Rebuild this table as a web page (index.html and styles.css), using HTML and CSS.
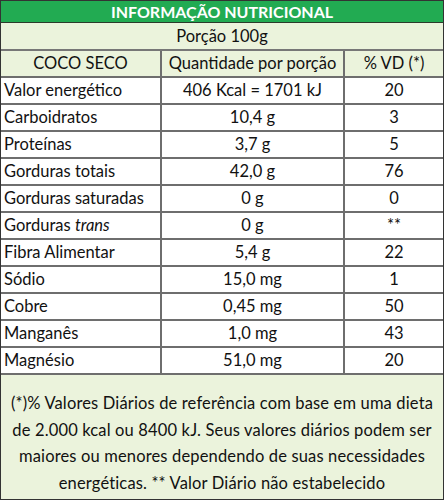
FILE: index.html
```html
<!DOCTYPE html>
<html lang="pt">
<head>
  <meta charset="UTF-8" />
  <meta name="viewport" content="width=device-width, initial-scale=1.0" />
  <title>Informação Nutricional - Coco Seco</title>
  <link rel="stylesheet" href="styles.css">
</head>
<body>
  <div class="label">
    <div class="title">INFORMAÇÃO NUTRICIONAL</div>
    <div class="portion">Porção 100g</div>

    <div class="row head">
      <div class="cell">COCO SECO</div>
      <div class="cell">Quantidade por porção</div>
      <div class="cell">% VD (*)</div>
    </div>

    <div class="row">
      <div class="cell name">Valor energético</div>
      <div class="cell">406 Kcal = 1701 kJ</div>
      <div class="cell">20</div>
    </div>
    <div class="row">
      <div class="cell name">Carboidratos</div>
      <div class="cell">10,4 g</div>
      <div class="cell">3</div>
    </div>
    <div class="row">
      <div class="cell name">Proteínas</div>
      <div class="cell">3,7 g</div>
      <div class="cell">5</div>
    </div>
    <div class="row">
      <div class="cell name">Gorduras totais</div>
      <div class="cell">42,0 g</div>
      <div class="cell">76</div>
    </div>
    <div class="row">
      <div class="cell name">Gorduras saturadas</div>
      <div class="cell">0 g</div>
      <div class="cell">0</div>
    </div>
    <div class="row">
      <div class="cell name">Gorduras <em>trans</em></div>
      <div class="cell">0 g</div>
      <div class="cell">**</div>
    </div>
    <div class="row">
      <div class="cell name">Fibra Alimentar</div>
      <div class="cell">5,4 g</div>
      <div class="cell">22</div>
    </div>
    <div class="row">
      <div class="cell name">Sódio</div>
      <div class="cell">15,0 mg</div>
      <div class="cell">1</div>
    </div>
    <div class="row">
      <div class="cell name">Cobre</div>
      <div class="cell">0,45 mg</div>
      <div class="cell">50</div>
    </div>
    <div class="row">
      <div class="cell name">Manganês</div>
      <div class="cell">1,0 mg</div>
      <div class="cell">43</div>
    </div>
    <div class="row">
      <div class="cell name">Magnésio</div>
      <div class="cell">51,0 mg</div>
      <div class="cell">20</div>
    </div>

    <div class="note">
      (*)% Valores Diários de referência com base em uma dieta de 2.000 kcal ou 8400 kJ. Seus valores diários podem ser maiores ou menores dependendo de suas necessidades energéticas. ** Valor Diário não estabelecido
    </div>
  </div>
</body>
</html>
```

FILE: styles.css
```css
body {
  margin: 0;
  background: white;
  font-family: Lato, "Open Sans", sans-serif;
  font-size: 16.5px;
  color: #111;
}
.label {
  width: 444px;
  height: 500px;
  box-sizing: border-box;
  border: 1px solid #333;
  overflow: hidden;
}
.title {
  height: 21px;
  line-height: 21px;
  background: #22ab52;
  color: white;
  font-weight: bold;
  font-size: 16px;
  text-align: center;
  border-bottom: 1px solid #2b3a2b;
}
.portion {
  height: 26px;
  line-height: 26px;
  background: #ebf3dc;
  text-align: center;
  border-bottom: 2px solid #777;
}
.row {
  display: grid;
  grid-template-columns: 161px 183px 1fr;
  height: 25px;
  border-bottom: 2px solid #6e6e6e;
}
.row.head {
  background: #ebf3dc;
}
.cell {
  line-height: 25px;
  text-align: center;
  border-right: 2px solid #6e6e6e;
  white-space: nowrap;
}
.cell:last-child {
  border-right: none;
}
.cell.name {
  text-align: left;
  padding-left: 3px;
}
.note {
  height: 124px;
  box-sizing: border-box;
  padding: 15px 8px 0;
  background: #ebf3dc;
  text-align: center;
  line-height: 26.5px;
  letter-spacing: 0.15px;
}
```
